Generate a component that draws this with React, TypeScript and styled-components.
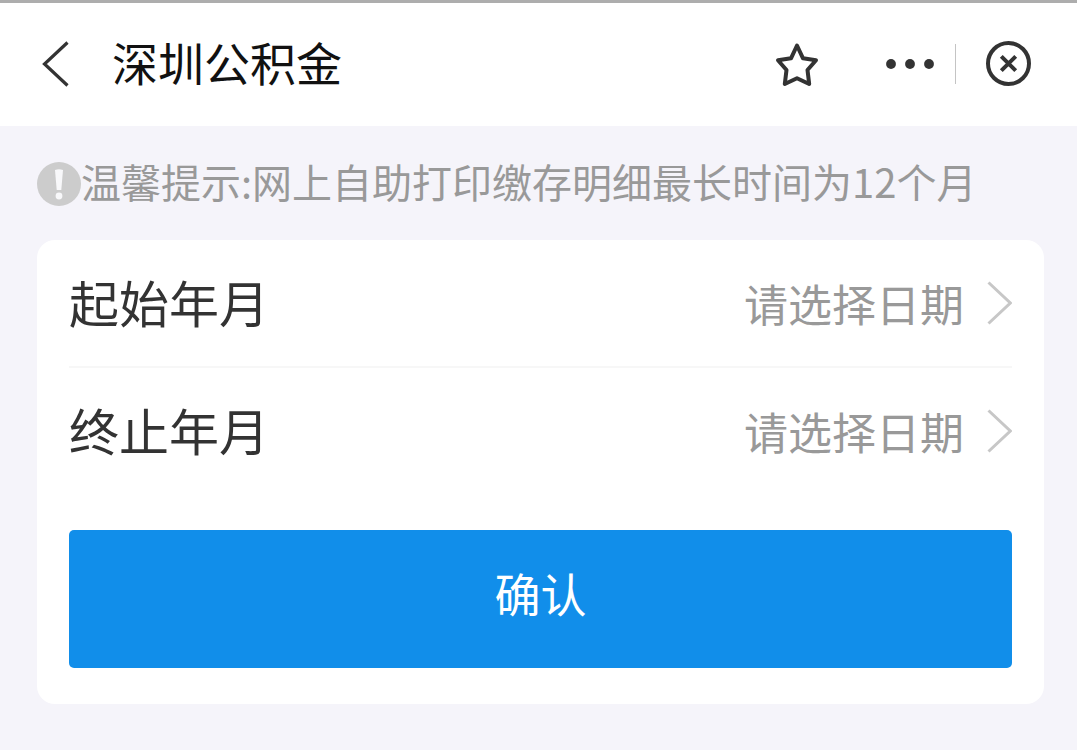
import React from "react";
import styled, { createGlobalStyle } from "styled-components";

const GlobalStyle = createGlobalStyle`
  * { box-sizing: border-box; }
  body {
    margin: 0;
    background: #f5f4fa;
    font-family: "Noto Sans CJK SC", sans-serif;
  }
  button {
    font-family: inherit;
    border: 0;
    padding: 0;
    background: none;
    cursor: pointer;
  }
`;

const Header = styled.header`
  display: flex;
  align-items: center;
  height: 126px;
  padding: 0 44px 2px 40px;
  border-top: 3px solid #adadad;
  background: #fff;
`;

const Title = styled.h1`
  flex: 1;
  margin: 0 0 0 42px;
  padding-bottom: 6px;
  font-size: 46px;
  line-height: 64px;
  font-weight: 400;
  color: #111;
`;

const IconButton = styled.button`
  display: flex;
  color: #333;
`;

const Capsule = styled.div`
  display: flex;
  align-items: center;
  margin-left: 66px;
`;

const CapsuleLine = styled.span`
  width: 1px;
  height: 40px;
  margin: 0 29px 0 20px;
  background: #c4c4c4;
`;

const Main = styled.main`
  padding: 36px 33px 46px 37px;
`;

const Tip = styled.p`
  display: flex;
  align-items: center;
  height: 44px;
  margin: 0 0 34px;
  font-size: 40px;
  line-height: 44px;
  color: #999;
  white-space: nowrap;
`;

const TipText = styled.span`
  padding-bottom: 6px;
`;

const Card = styled.form`
  padding: 0 32px 36px;
  border-radius: 18px;
  background: #fff;
`;

const Row = styled.div<{ $divided?: boolean }>`
  display: flex;
  align-items: center;
  justify-content: space-between;
  height: 128px;
  border-bottom: 2px solid ${(p) => (p.$divided ? "#f7f7f7" : "transparent")};
`;

const Label = styled.label`
  padding-bottom: 4px;
  font-size: 50px;
  line-height: 64px;
  color: #333;
`;

const Picker = styled.button`
  display: flex;
  align-items: center;
  gap: 22px;
  font-size: 44px;
  line-height: 64px;
  color: #999;
`;

const Confirm = styled.button`
  display: block;
  width: 100%;
  height: 138px;
  margin-top: 34px;
  padding-bottom: 14px;
  border-radius: 5px;
  background: #118eea;
  font-size: 46px;
  line-height: 64px;
  color: #fff;
`;

function BackIcon() {
  return (
    <svg width="30" height="46" viewBox="0 0 30 46" fill="none" stroke="currentColor" strokeWidth="3.200">
      <path d="M27.500 1.500 4.500 23 27.500 44.500" />
    </svg>
  );
}

function StarIcon() {
  return (
    <svg width="44" height="46" viewBox="0 0 44 46" fill="none" stroke="currentColor" strokeWidth="4" strokeLinejoin="round">
      <path d="M22 4.500 28 17.300 41 19.300 32.500 29 34.200 43 22 37.200 9.800 43 11.500 29 3 19.300 16 17.300Z" />
    </svg>
  );
}

function MoreIcon() {
  return (
    <svg width="50" height="46" viewBox="0 0 50 46" fill="currentColor">
      <circle cx="6" cy="23" r="4.900" />
      <circle cx="25" cy="23" r="4.900" />
      <circle cx="44" cy="23" r="4.900" />
    </svg>
  );
}

function CloseIcon() {
  return (
    <svg width="48" height="46" viewBox="0 0 48 46" fill="none" stroke="currentColor" strokeWidth="4">
      <circle cx="23.500" cy="22.500" r="20.500" />
      <path d="M16.300 15.300 30.700 29.700M30.700 15.300 16.300 29.700" />
    </svg>
  );
}

function NoticeIcon() {
  return (
    <svg width="44" height="44" viewBox="0 0 44 44" aria-hidden="true">
      <circle cx="22" cy="22" r="22" fill="#ccc" />
      <path d="M18 8Q22 6.500 26 8L24.300 28H19.700Z" fill="#f8f8fa" />
      <circle cx="22" cy="34" r="3.400" fill="#f8f8fa" />
    </svg>
  );
}

function ChevronIcon() {
  return (
    <svg width="26" height="46" viewBox="0 0 26 46" fill="none" stroke="#c7c7c7" strokeWidth="3" aria-hidden="true">
      <path d="M2.500 2.500 24.300 23 2.500 43.500" />
    </svg>
  );
}

function DateRow({ id, label, divided }: { id: string; label: string; divided?: boolean }) {
  return (
    <Row $divided={divided}>
      <Label htmlFor={id}>{label}</Label>
      <Picker type="button" id={id}>
        请选择日期
        <ChevronIcon />
      </Picker>
    </Row>
  );
}

export default function App() {
  return (
    <>
      <GlobalStyle />
      <Header>
        <IconButton type="button" aria-label="返回"><BackIcon /></IconButton>
        <Title>深圳公积金</Title>
        <IconButton type="button" aria-label="收藏"><StarIcon /></IconButton>
        <Capsule>
          <IconButton type="button" aria-label="更多"><MoreIcon /></IconButton>
          <CapsuleLine />
          <IconButton type="button" aria-label="关闭"><CloseIcon /></IconButton>
        </Capsule>
      </Header>
      <Main>
        <Tip>
          <NoticeIcon />
          <TipText>温馨提示:网上自助打印缴存明细最长时间为12个月</TipText>
        </Tip>
        <Card onSubmit={(e) => e.preventDefault()}>
          <DateRow id="start-month" label="起始年月" divided />
          <DateRow id="end-month" label="终止年月" />
          <Confirm type="submit">确认</Confirm>
        </Card>
      </Main>
    </>
  );
}
